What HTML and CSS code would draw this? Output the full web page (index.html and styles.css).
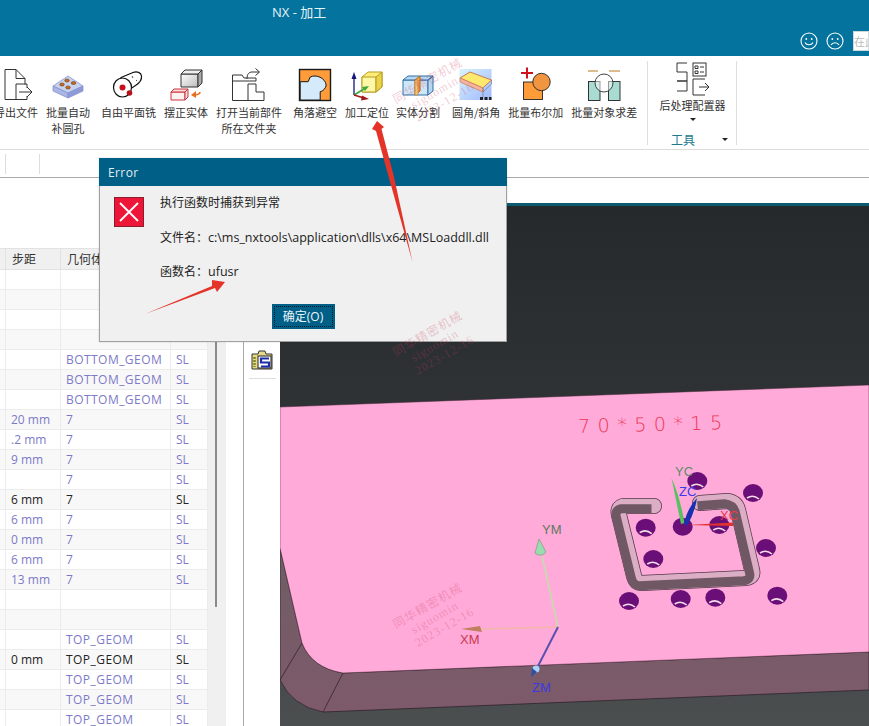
FILE: index.html
```html
<!DOCTYPE html>
<html lang="zh-CN">
<head>
<meta charset="utf-8">
<title>NX - 加工</title>
<link rel="stylesheet" href="styles.css">
</head>
<body>
<div class="app">
  <header class="titlebar">
    <div class="title">NX - 加工</div>
    <div class="title-tools">
      <svg class="face" viewBox="0 0 18 18"><circle cx="9" cy="9" r="8"/><circle class="eye" cx="6.300" cy="7" r=".9"/><circle class="eye" cx="11.700" cy="7" r=".9"/><path d="M5 10.500c1.500 3 6.500 3 8 0"/></svg>
      <svg class="face" viewBox="0 0 18 18"><circle cx="9" cy="9" r="8"/><circle class="eye" cx="6.300" cy="7" r=".9"/><circle class="eye" cx="11.700" cy="7" r=".9"/><path d="M5 13c1.500-3 6.500-3 8 0"/></svg>
      <div class="search">在此</div>
    </div>
  </header>

  <section class="ribbon">
    <div class="tools">
      <div class="tool">
        <svg class="ico" viewBox="0 0 36 36"><g fill="none" stroke="#333" stroke-width="1"><path d="M18 3.500H7v30h11"/><path d="M18 3.500l9 9v6"/><path d="M18 3.500v9h9"/><path d="M18 33.500V18h11v4M29 30v3.500H18"/><path d="M21 26h12M29 21l5 5-5 5"/></g></svg>
        <div class="lbl">导出文件</div>
      </div>
      <div class="tool">
        <svg class="ico" viewBox="0 0 36 36"><path d="M3 20l15-10 15 10-15 7z" fill="#c5d3ef" stroke="#8a93cc" stroke-width=".8"/><path d="M3 20v5l15 7v-5z" fill="#a9b5e6" stroke="#8a93cc" stroke-width=".8"/><path d="M33 20v5l-15 7v-5z" fill="#8f9ad8" stroke="#8a93cc" stroke-width=".8"/><g fill="#c8681c" stroke="#7a3b10" stroke-width=".6"><ellipse cx="17" cy="14.500" rx="2.300" ry="1.500"/><ellipse cx="23.500" cy="17" rx="2.300" ry="1.500"/><ellipse cx="12" cy="18.500" rx="2.300" ry="1.500"/><ellipse cx="18" cy="21.500" rx="2.300" ry="1.500"/></g></svg>
        <div class="lbl">批量自动<br>补圆孔</div>
      </div>
      <div class="tool sp">
        <svg class="ico" viewBox="0 0 36 36"><g stroke="#111" fill="#fff" stroke-width="1.200"><path d="M10 11.500L22 6.500c4-1.500 8 0 8.500 3.500.5 4-2 7-6 9.500l-7.500 5z"/><ellipse cx="11.500" cy="21.500" rx="9" ry="9.500"/></g><circle cx="11.500" cy="21.500" r="3" fill="#c8101c"/><circle cx="18.500" cy="27" r="2.800" fill="#b5101c"/><path d="M21 10l1 2M25 14l1 1" stroke="#555" fill="none"/></svg>
        <div class="lbl">自由平面铣</div>
      </div>
      <div class="tool">
        <svg class="ico" viewBox="0 0 36 36"><defs><linearGradient id="cubeg" x1="0" y1="0" x2="1" y2="1"><stop offset="0" stop-color="#fff"/><stop offset="1" stop-color="#bbb"/></linearGradient></defs><path d="M13 8h17v13H13z" fill="url(#cubeg)" stroke="#333"/><path d="M13 8l4-4h17l-4 4z" fill="#eee" stroke="#333"/><path d="M30 8l4-4v13l-4 4z" fill="#aaa" stroke="#333"/><path d="M3 26h14v8H3z" fill="#fdf2f2" stroke="#c8343c"/><path d="M3 26l3-3h14l-3 3zM17 26l3-3v8l-3 3z" fill="#fbdcdc" stroke="#c8343c"/><path d="M32 26c0 2-3 3-7 3" fill="none" stroke="#e8701c" stroke-width="1.600"/><path d="M28 25l-5 4 5 3z" fill="#e8701c"/></svg>
        <div class="lbl">摆正实体</div>
      </div>
      <div class="tool">
        <svg class="ico" viewBox="0 0 36 36"><g fill="none" stroke="#333" stroke-width="1"><path d="M17 34.500H1.500V9H11l2 3h12v3H1.500"/><path d="M17 34.500V18h8v8h8v8.500z"/><path d="M16 13c0-5 2-7 5-7h7"/><path d="M24.500 2.500L28.500 6l-4 3.500"/></g></svg>
        <div class="lbl">打开当前部件<br>所在文件夹</div>
      </div>
      <div class="tool sp">
        <svg class="ico" viewBox="0 0 36 36"><rect x="2.500" y="3.500" width="31" height="31" fill="#ff9b38" stroke="#1a1a1a" stroke-width="1.400"/><path d="M3.200 34V15.700h8l2-4.700c6-3 15 1 16 8-.5 3.500-3 6-6 6.700V34z" fill="#d5ebfb" stroke="#1a1a1a"/></svg>
        <div class="lbl">角落避空</div>
      </div>
      <div class="tool">
        <svg class="ico" viewBox="0 0 36 36"><path d="M13 11l6-5h14v15l-6 5H13z" fill="#ffef7a" stroke="#b59a20"/><path d="M13 11h14v15H13z" fill="#fff7a8" stroke="#b59a20"/><path d="M27 11l6-5v15l-6 5z" fill="#ead24a" stroke="#b59a20"/><path d="M5 29V11" stroke="#16167a" stroke-width="1.300"/><path d="M5 6l-2.500 7h5z" fill="#16167a"/><path d="M5 29l10-6" stroke="#3aa83a" stroke-width="1.500"/><path d="M20 20l-7 1 3 4z" fill="#3aa83a"/><path d="M5 29l10 3" stroke="#a01818" stroke-width="1.500"/><path d="M20 33l-7-3.500-1 5z" fill="#a01818"/></svg>
        <div class="lbl">加工定位</div>
      </div>
      <div class="tool nudge">
        <svg class="ico" viewBox="0 0 36 36"><path d="M3 14h25v15H3z" fill="#cfe6f8" stroke="#2f6fa8"/><path d="M3 14l5-4h25l-5 4zM28 14l5-4v15l-5 4z" fill="#b8d8f2" stroke="#2f6fa8"/><path d="M15 14l5-4v15l-5 4z" fill="#f6a94a" stroke="#b46a10"/><path d="M15 14h3v15h-3z" fill="#f4c07a" stroke="#b46a10" stroke-width=".5"/></svg>
        <div class="lbl">实体分割</div>
      </div>
      <div class="tool sp2">
        <svg class="ico" viewBox="0 0 36 36"><defs><linearGradient id="sky" x1="0" y1="0" x2="1" y2="1"><stop offset="0" stop-color="#d8f4fb"/><stop offset="1" stop-color="#9fb8ff"/></linearGradient></defs><rect x="1.500" y="3" width="32" height="31" fill="url(#sky)"/><path d="M12 6l21.500 8-8.700 8L2 12z" fill="#ffe86e" stroke="#c87a5a"/><path d="M2 12l0 4 23 10v-4z" fill="#f5b4a0" stroke="#c87a5a" stroke-width=".7"/><path d="M25 22v9M33.500 14v4l-8.500 8" fill="none" stroke="#777" stroke-width=".7"/><path d="M22 31h3v3h-3zM26.500 31h3v3h-3zM31 31h2.500v3H31z" fill="#222"/></svg>
        <div class="lbl">圆角/斜角</div>
      </div>
      <div class="tool">
        <svg class="ico" viewBox="0 0 36 36"><rect x="5.500" y="16" width="19" height="17.500" fill="#ff9b38" stroke="#222" stroke-width=".9"/><circle cx="23.500" cy="16" r="8.700" fill="#f29540" stroke="#222" stroke-width=".9"/><path d="M3 7h12M9 1.500v11" stroke="#d0101c" stroke-width="2"/></svg>
        <div class="lbl">批量布尔加</div>
      </div>
      <div class="tool">
        <svg class="ico" viewBox="0 0 36 36"><path d="M2 5h10M23 5h11" stroke="#b87a20" stroke-width="1"/><rect x="2.500" y="15.500" width="11.500" height="19" fill="#a8dcd2" stroke="#333"/><rect x="22.500" y="15.500" width="11.500" height="19" fill="#a8dcd2" stroke="#333"/><circle cx="18" cy="17" r="9" fill="#fff" fill-opacity=".5" stroke="#444"/></svg>
        <div class="lbl">批量对象求差</div>
      </div>
    </div>
    <div class="group">
      <div class="group-main">
        <svg class="ico" viewBox="0 0 36 36"><g fill="none" stroke="#333" stroke-width="1"><path d="M12 2H2v9h10v9H2"/><path d="M2 20h10v10H2"/><rect x="18" y="2" width="13" height="13"/><path d="M20 5h3v2.500h-3zM20 10h3v2.500h-3zM25 6h4M25 11h4"/><path d="M30 18H18v16h12"/><path d="M24 26h9M30 22l4 4-4 4"/></g></svg>
        <div class="lbl">后处理配置器</div>
        <div class="caret"></div>
      </div>
      <div class="group-foot"><span class="group-name">工具</span><span class="caret foot-caret"></span></div>
    </div>
  </section>

  <nav class="subbar"><i class="sep first"></i><i class="sep second"></i></nav>

  <main class="work">
    <aside class="nav">
      <table class="ops">
        <colgroup><col class="c0"><col class="c1"><col class="c2"><col class="c3"></colgroup>
        <thead><tr><th></th><th>步距</th><th>几何体</th><th></th></tr></thead>
        <tbody>
          <tr><td></td><td></td><td></td><td></td></tr>
          <tr><td></td><td></td><td></td><td></td></tr>
          <tr><td></td><td></td><td></td><td></td></tr>
          <tr><td></td><td></td><td></td><td></td></tr>
          <tr><td></td><td></td><td>BOTTOM_GEOM</td><td>SL</td></tr>
          <tr><td></td><td></td><td>BOTTOM_GEOM</td><td>SL</td></tr>
          <tr><td></td><td></td><td>BOTTOM_GEOM</td><td>SL</td></tr>
          <tr><td></td><td>20 mm</td><td>7</td><td>SL</td></tr>
          <tr><td></td><td>.2 mm</td><td>7</td><td>SL</td></tr>
          <tr><td></td><td>9 mm</td><td>7</td><td>SL</td></tr>
          <tr><td></td><td></td><td>7</td><td>SL</td></tr>
          <tr class="on"><td></td><td>6 mm</td><td>7</td><td>SL</td></tr>
          <tr><td></td><td>6 mm</td><td>7</td><td>SL</td></tr>
          <tr><td></td><td>0 mm</td><td>7</td><td>SL</td></tr>
          <tr><td></td><td>6 mm</td><td>7</td><td>SL</td></tr>
          <tr><td></td><td>13 mm</td><td>7</td><td>SL</td></tr>
          <tr><td></td><td></td><td></td><td></td></tr>
          <tr><td></td><td></td><td></td><td></td></tr>
          <tr><td></td><td></td><td>TOP_GEOM</td><td>SL</td></tr>
          <tr class="on"><td></td><td>0 mm</td><td>TOP_GEOM</td><td>SL</td></tr>
          <tr><td></td><td></td><td>TOP_GEOM</td><td>SL</td></tr>
          <tr><td></td><td></td><td>TOP_GEOM</td><td>SL</td></tr>
          <tr><td></td><td></td><td>TOP_GEOM</td><td>SL</td></tr>
        </tbody>
      </table>
      <div class="scroll"><div class="thumb"></div></div>
    </aside>
    <div class="gutter"></div>
    <div class="rail">
      <svg class="rail-ico" viewBox="0 0 22 22"><path d="M1 5h6l1-3h6l1 3h6v15H1z" fill="#e8d98a" stroke="#333"/><rect x="7" y="7" width="13" height="12" fill="#fff" stroke="#222"/><path d="M18 9.500h-8v4h8v4h-8" fill="none" stroke="#1c2fa8" stroke-width="2.200"/><path d="M3.500 8v10" stroke="#7a8a20" stroke-width="2.500" stroke-dasharray="2 1"/></svg>
      <div class="rail-line"></div>
    </div>
    <div class="view">
      <div class="view-gap"></div>
      <div class="view-strip"></div>
      <svg class="scene" viewBox="280 206 589 520" preserveAspectRatio="none">
        <defs>
          <linearGradient id="bg" x1="0" y1="0" x2="0" y2="1"><stop offset="0" stop-color="#26292c"/><stop offset=".4" stop-color="#303335"/><stop offset="1" stop-color="#4c4f50"/></linearGradient>
          <linearGradient id="side" x1="0" y1="0" x2="0" y2="1"><stop offset="0" stop-color="#6e5d63"/><stop offset="1" stop-color="#7e5a6b"/></linearGradient>
          <path id="slot" d="M654 506H623Q617 508 619 515L634 576Q636 583 642 583L746 578Q754 577 752 570L738 510Q736 502 727 501L700 503"/>
        </defs>
        <rect x="280" y="206" width="589" height="520" fill="url(#bg)"/>
        <path d="M280 548L302 643Q312 668 343 673L869 652V690L323 712Q292 706 280 680Z" fill="url(#side)" stroke="#2a1c24" stroke-width=".7"/>
        <path d="M280 680L302 643M323 712L343 673" stroke="#2a1c24" stroke-width=".7" fill="none"/>
        <path d="M280 407L869 385V652L343 673Q312 668 302 643L280 548Z" fill="#ffaad8" stroke="#4a2a3c" stroke-width=".5"/>
        <text class="dim" x="578" y="431" transform="rotate(-1.500 650 423)">70*50*15</text>

        <g fill="none" stroke-linejoin="round">
          <use href="#slot" stroke="#54384a" stroke-width="16" stroke-linecap="round"/>
          <use href="#slot" stroke="#dcaec6" stroke-width="14.500" stroke-linecap="round"/>
          <use href="#slot" stroke="#6f5763" stroke-width="9" transform="translate(-2.500 2.800)"/>
        </g>

        <g class="holes">
          <g transform="translate(697.300 481)"><ellipse class="hole" rx="10" ry="9"/><path class="glint" d="M-6 5Q0 1 6 6"/></g>
          <g transform="translate(753 493)"><ellipse class="hole" rx="10" ry="9"/><path class="glint" d="M-6 5Q0 1 6 6"/></g>
          <g transform="translate(645.700 527.700)"><ellipse class="hole" rx="10" ry="9"/><path class="glint" d="M-6 5Q0 1 6 6"/></g>
          <g transform="translate(682.700 526.700)"><ellipse class="hole" rx="10" ry="9"/></g>
          <g transform="translate(719.300 525)"><ellipse class="hole" rx="10" ry="9"/><path class="glint" d="M-6 5Q0 1 6 6"/></g>
          <g transform="translate(653.300 559)"><ellipse class="hole" rx="10" ry="9"/><path class="glint" d="M-6 5Q0 1 6 6"/></g>
          <g transform="translate(766 548)"><ellipse class="hole" rx="10" ry="9"/><path class="glint" d="M-6 5Q0 1 6 6"/></g>
          <g transform="translate(629 601)"><ellipse class="hole" rx="10" ry="9"/><path class="glint" d="M-6 5Q0 1 6 6"/></g>
          <g transform="translate(680.700 599)"><ellipse class="hole" rx="10" ry="9"/><path class="glint" d="M-6 5Q0 1 6 6"/></g>
          <g transform="translate(715.300 597.700)"><ellipse class="hole" rx="10" ry="9"/><path class="glint" d="M-6 5Q0 1 6 6"/></g>
          <g transform="translate(777.300 595.700)"><ellipse class="hole" rx="10" ry="9"/><path class="glint" d="M-6 5Q0 1 6 6"/></g>
        </g>

        <path d="M681 524L671.500 478Q680 497 684.500 523Z" fill="#58c060"/>
        <path d="M684 523Q688 507 697 498Q695 512 687 526Z" fill="#1a30b0"/>
        <path d="M687 525L733 522.500V526Z" fill="#e03030"/>
        <text class="axis" x="675" y="476" fill="#5c8a6a">YC</text>
        <text class="axis" x="679" y="496" fill="#3a3ae8">ZC</text>
        <text class="axis" x="720" y="520" fill="#e83a4a">XC</text>

        <path d="M558 627L542 556" stroke="#c8d8b0" stroke-width="1.800"/>
        <path d="M539 539L535 553Q541 558 546 552Z" fill="#9adcb0" stroke="#5c8a6a" stroke-width=".5"/>
        <path d="M558 627L481 629" stroke="#f0b8a8" stroke-width="1.500"/>
        <path d="M461 629L480 626L482 632Z" fill="#c08060"/>
        <path d="M558 627L537 668" stroke="#5c50b0" stroke-width="2"/>
        <circle cx="536" cy="669" r="3.500" fill="#a8d4f8"/>
        <path d="M532 668L531 677L537 672Z" fill="#3050a0"/>
        <text class="axis" x="542" y="534" fill="#5a7a62">YM</text>
        <text class="axis" x="460" y="644" fill="#c83a50">XM</text>
        <text class="axis" x="532" y="692" fill="#3a3ae0">ZM</text>
      </svg>
    </div>
  </main>

  <div class="dialog">
    <div class="dlg-head">Error</div>
    <div class="dlg-body">
      <svg class="dlg-ico" viewBox="0 0 30 30"><rect x=".5" y=".5" width="29" height="29" fill="#ee1638" stroke="#8a1c2c"/><path d="M6 6l18 18M24 6L6 24" stroke="#fff" stroke-width="1.800"/></svg>
      <div class="dlg-text">
        <p>执行函数时捕获到异常</p>
        <p>文件名：<span class="lat">c:\ms_nxtools\application\dlls\x64\MSLoaddll.dll</span></p>
        <p>函数名：<span class="lat">ufusr</span></p>
      </div>
    </div>
    <div class="dlg-foot"><button class="dlg-btn"><span>确定(O)</span></button></div>
  </div>

  <svg class="overlay" viewBox="0 0 869 726">
    <g class="wm" transform="translate(0 -525)"><text transform="translate(396 629) rotate(-30)">同华精密机械</text><text transform="translate(414 634) rotate(-30)">siguomin</text><text transform="translate(418 647) rotate(-30)">2023-12-16</text></g>
    <g class="wm" transform="translate(0 -272)"><text transform="translate(396 629) rotate(-30)">同华精密机械</text><text transform="translate(414 634) rotate(-30)">siguomin</text><text transform="translate(418 647) rotate(-30)">2023-12-16</text></g>
    <g class="wm"><text transform="translate(396 629) rotate(-30)">同华精密机械</text><text transform="translate(414 634) rotate(-30)">siguomin</text><text transform="translate(418 647) rotate(-30)">2023-12-16</text></g>
    <path class="arrow" d="M377 121L384 127L381.500 129L394 177L412.500 262L389 178L376 131L372 129Z"/>
    <path class="arrow" d="M225 282L217 292L215 288L145 314L212 286L212 280Z"/>
  </svg>
</div>
</body>
</html>
```

FILE: styles.css
```css
* { box-sizing: border-box; }
html, body { margin: 0; padding: 0; height: 100%; overflow: hidden; background: #fff; }
body { font-family: "Open Sans", "Noto Sans CJK SC", sans-serif; font-size: 12px; color: #333; }

.app { position: relative; width: 869px; height: 726px; overflow: hidden; display: flex; flex-direction: column; }

.titlebar { height: 56px; flex: none; background: #04739e; display: flex; justify-content: space-between; color: #e6f2f7; }
.title { padding: 3px 0 0 272px; font-size: 13px; line-height: 18px; }
.title-tools { display: flex; align-items: flex-start; padding-top: 31px; gap: 8px; }
.face { width: 18px; height: 18px; margin-top: 1px; fill: none; stroke: #fff; stroke-width: 1.1; }
.face .eye { fill: #fff; stroke: none; }
.search { width: 16px; height: 20px; margin-left: 1px; background: #fff; color: #bbb; font-size: 11px; line-height: 20px; white-space: nowrap; overflow: hidden; border: 1px solid #cfd8dc; }

.ribbon { height: 94px; flex: none; background: #fff; border-bottom: 1px solid #dcdcdc; display: flex; font-family: "Noto Sans CJK SC", sans-serif; }
.tools { display: flex; gap: 8px; margin-left: -6px; padding-top: 10px; width: 653px; flex: none; }
.tool { display: flex; flex-direction: column; align-items: center; flex: none; }
.tool.sp { margin-left: 3px; }
.tool.sp2 { margin-left: 4px; }
.tool.nudge { margin-left: -1px; }
.ico { width: 36px; height: 36px; flex: none; display: block; }
.lbl { margin-top: 2px; font-size: 11px; line-height: 16px; text-align: center; white-space: nowrap; color: #333; }

.group { width: 90px; height: 84px; margin-top: 5px; border-left: 1px solid #dedede; border-right: 1px solid #dedede; display: flex; flex-direction: column; align-items: center; position: relative; }
.group-main { display: flex; flex-direction: column; align-items: center; margin-left: 1px; }
.group-main .lbl { margin-top: 0; }
.caret { width: 0; height: 0; border: 3px solid transparent; border-top: 3px solid #222; border-bottom: 0; margin-top: 5px; }
.group-foot { position: absolute; left: 0; right: 0; bottom: -3px; display: flex; justify-content: center; }
.group-name { font-size: 12px; line-height: 16px; color: #1d7a8f; margin-left: -18px; }
.foot-caret { position: absolute; right: 8px; top: 6px; margin: 0; }

.subbar { height: 28px; flex: none; background: #fff; border-bottom: 1px solid #aaa; position: relative; display: flex; align-items: center; }
.sep { display: block; width: 1px; height: 20px; background: #ddd; flex: none; }
.sep.first { margin-left: 5px; }
.sep.second { margin-left: 33px; }

.work { flex: 1; min-height: 0; display: flex; }
.nav { width: 225px; flex: none; display: flex; padding-top: 70px; }
.ops { width: 208px; height: max-content; flex: none; table-layout: fixed; border-collapse: collapse; color: #7d7ac9; margin-left: -1px; }
.c0 { width: 6px; } .c1 { width: 55px; } .c2 { width: 110px; } .c3 { width: 37px; }
.ops th { height: 21px; padding: 0 0 0 6px; text-align: left; font-weight: 400; color: #333; background: #f0f0f0; border: 1px solid #e2e2e2; white-space: nowrap; overflow: hidden; }
.ops td { height: 20px; padding: 0 5px; border: 1px solid #ececec; white-space: nowrap; overflow: hidden; line-height: 19px; }
.ops td:nth-child(3) { letter-spacing: .45px; }
.ops tbody tr:nth-child(odd) { background: #fff; }
.ops tbody tr:nth-child(even) { background: #f8f8f8; }
.ops tr.on td { color: #222; }
.scroll { width: 18px; flex: none; background: #f0f0f0; position: relative; margin-top: 0; }
.thumb { width: 2px; height: 359px; margin-left: 7px; background: #8a8a8a; }

.gutter { width: 18px; flex: none; background: #fff; border-left: 1px solid #ccc; }
.rail { width: 37px; flex: none; background: #fff; border-left: 1px solid #a8a8a8; display: flex; flex-direction: column; align-items: center; padding-top: 171px; }
.rail-ico { width: 22px; height: 22px; flex: none; }
.rail-line { width: 27px; height: 1px; background: #ddd; margin-top: 7px; }

.view { flex: 1; min-width: 0; display: flex; flex-direction: column; }
.view-gap { height: 25px; flex: none; background: #fff; }
.view-strip { height: 3px; flex: none; background: #0c5a6e; }
.scene { flex: 1; min-height: 0; width: 100%; display: block; }
.dim { font-family: "DejaVu Sans", sans-serif; font-size: 19px; letter-spacing: 7.500px; fill: #ec3450; font-weight: 200; }
.axis { font-family: "Liberation Sans", sans-serif; font-size: 13px; }
.hole { fill: #6b0f78; }
.glint { fill: none; stroke: #f4dfe8; stroke-width: 1.600; }

.dialog { position: absolute; left: 99px; top: 158px; width: 408px; height: 184px; background: #f0f0f0; border: 1px solid #a0a0a0; border-top: 0; box-shadow: 0 0 2px rgba(0,0,0,.15); display: flex; flex-direction: column; }
.dlg-head { height: 28px; flex: none; margin: 0 -1px; background: #005f87; color: #e4eef2; font-size: 12px; line-height: 29px; padding-left: 9px; letter-spacing: .4px; }
.dlg-body { display: flex; flex: 1; padding: 11px 0 0 14px; gap: 16px; }
.dlg-ico { width: 30px; height: 30px; flex: none; }
.dlg-text { margin-top: -3px; }
.dlg-text p { margin: 0 0 17.500px; line-height: 17px; white-space: nowrap; color: #222; }
.lat { font-size: 12.500px; }
.dlg-foot { display: flex; justify-content: center; padding-bottom: 12px; }
.dlg-btn { width: 63px; height: 25px; padding: 2px; background: #005f87; border: 0; color: #eaf5f9; font: 12px "Open Sans", "Noto Sans CJK SC", sans-serif; }
.dlg-btn span { display: block; height: 21px; line-height: 19px; border: 1px dotted #001a28; }

.overlay { position: absolute; left: 0; top: 0; width: 869px; height: 726px; pointer-events: none; }
.wm text { font-family: "Liberation Serif", "Noto Sans CJK SC", serif; font-size: 12px; letter-spacing: 1px; fill: #cc3a5c; fill-opacity: .28; }
.arrow { fill: #e4342a; }
```
